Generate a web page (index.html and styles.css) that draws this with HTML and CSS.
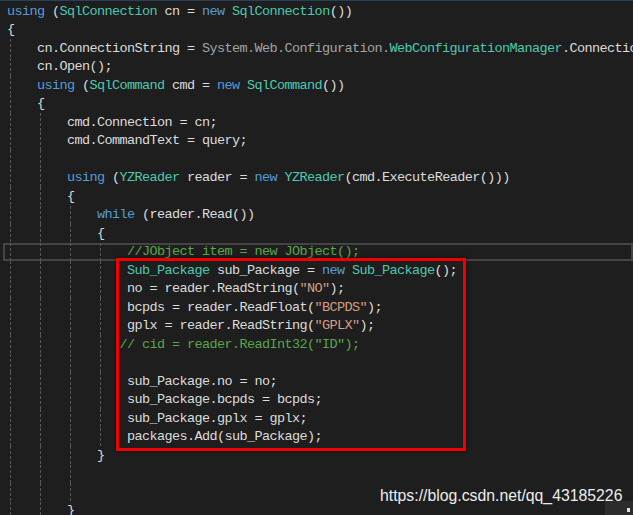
FILE: index.html
```html
<!DOCTYPE html>
<html lang="en">

<head>
    <meta charset="UTF-8" />
    <meta name="viewport" content="width=device-width, initial-scale=1.0" />
    <title>Sub_Package reader</title>
    <link rel="stylesheet" href="styles.css">
</head>

<body>
    <div class="editor">
        <div class="code">
            <div class="ln"><span><span class="k">using</span> (<span class="t">SqlConnection</span> cn = <span class="k">new</span> <span class="t">SqlConnection</span>())</span></div>
            <div class="ln"><span>{</span></div>
            <div class="ln"><i class="g"></i><span>cn.ConnectionString = <span class="q">System.Web.Configuration.</span><span class="t">WebConfigurationManager</span>.ConnectionStrings[<span class="s">"conn"</span>].ConnectionString;</span></div>
            <div class="ln"><i class="g"></i><span>cn.Open();</span></div>
            <div class="ln"><i class="g"></i><span><span class="k">using</span> (<span class="t">SqlCommand</span> cmd = <span class="k">new</span> <span class="t">SqlCommand</span>())</span></div>
            <div class="ln"><i class="g"></i><span>{</span></div>
            <div class="ln"><i class="g"></i><i class="g"></i><span>cmd.Connection = cn;</span></div>
            <div class="ln"><i class="g"></i><i class="g"></i><span>cmd.CommandText = query;</span></div>
            <div class="ln"><i class="g"></i><i class="g"></i></div>
            <div class="ln"><i class="g"></i><i class="g"></i><span><span class="k">using</span> (<span class="t">YZReader</span> reader = <span class="k">new</span> <span class="t">YZReader</span>(cmd.ExecuteReader()))</span></div>
            <div class="ln"><i class="g"></i><i class="g"></i><span>{</span></div>
            <div class="ln"><i class="g"></i><i class="g"></i><i class="g"></i><span><span class="k">while</span> (reader.Read())</span></div>
            <div class="ln"><i class="g"></i><i class="g"></i><i class="g"></i><span>{</span></div>
            <div class="ln current"><i class="g"></i><i class="g"></i><i class="g"></i><i class="g"></i><span class="c">//JObject item = new JObject();</span></div>
            <div class="ln"><i class="g"></i><i class="g"></i><i class="g"></i><i class="g"></i><span><span class="t">Sub_Package</span> sub_Package = <span class="k">new</span> <span class="t">Sub_Package</span>();</span></div>
            <div class="ln"><i class="g"></i><i class="g"></i><i class="g"></i><i class="g"></i><span>no = reader.ReadString(<span class="s">"NO"</span>);</span></div>
            <div class="ln"><i class="g"></i><i class="g"></i><i class="g"></i><i class="g"></i><span>bcpds = reader.ReadFloat(<span class="s">"BCPDS"</span>);</span></div>
            <div class="ln"><i class="g"></i><i class="g"></i><i class="g"></i><i class="g"></i><span>gplx = reader.ReadString(<span class="s">"GPLX"</span>);</span></div>
            <div class="ln"><i class="g"></i><i class="g"></i><i class="g"></i><i class="g"></i><span class="c back">// cid = reader.ReadInt32("ID");</span></div>
            <div class="ln"><i class="g"></i><i class="g"></i><i class="g"></i><i class="g"></i></div>
            <div class="ln"><i class="g"></i><i class="g"></i><i class="g"></i><i class="g"></i><span>sub_Package.no = no;</span></div>
            <div class="ln"><i class="g"></i><i class="g"></i><i class="g"></i><i class="g"></i><span>sub_Package.bcpds = bcpds;</span></div>
            <div class="ln"><i class="g"></i><i class="g"></i><i class="g"></i><i class="g"></i><span>sub_Package.gplx = gplx;</span></div>
            <div class="ln"><i class="g"></i><i class="g"></i><i class="g"></i><i class="g"></i><span>packages.Add(sub_Package);</span></div>
            <div class="ln"><i class="g"></i><i class="g"></i><i class="g"></i><span>}</span></div>
            <div class="ln"><i class="g"></i><i class="g"></i><i class="g"></i></div>
            <div class="ln"><i class="g"></i><i class="g"></i><i class="g"></i></div>
            <div class="ln"><i class="g"></i><i class="g"></i><span>}</span></div>
        </div>

        <!-- annotation drawn over the code -->
        <div class="mark"></div>
        <div class="watermark">https://blog.csdn.net/qq_43185226</div>
        <div class="corner"></div>
    </div>
</body>

</html>
```

FILE: styles.css
```css
* {
    margin: 0;
    padding: 0;
    box-sizing: border-box;
}

body,
html {
    height: 100%;
    background: #1e1e1e;
    overflow: hidden;
}

.editor {
    position: relative;
    width: 633px;
    height: 515px;
    background: #1e1e1e;
    border-top: 1px solid #24405a;
    overflow: hidden;
}

.code {
    padding-top: 1px;
    font-family: "Liberation Mono", monospace;
    font-size: 13.5px;
    letter-spacing: -0.6px;
    color: #dcdcdc;
}

.ln {
    display: flex;
    align-items: center;
    height: 18.5px;
    padding-left: 7px;
    white-space: pre;
}

/* indent guide: one per open block */
.g {
    flex: none;
    width: 30px;
    height: 100%;
    background: repeating-linear-gradient(to bottom, #575757 0 3px, transparent 3px 5px) 3px 0 / 1px 100% no-repeat;
}

.current {
    margin-left: 3px;
    padding-left: 4px;
    box-shadow: inset 0 0 0 2px #444444;
}

.k {
    color: #569cd6;
}

.t {
    color: #4ec9b0;
}

.s {
    color: #d69d85;
}

.c {
    color: #57a64a;
}

.q {
    color: #a3a3a3;
}

.back {
    margin-left: -7.5px;
}

.mark {
    position: absolute;
    left: 116px;
    top: 257px;
    width: 350px;
    height: 193px;
    border: 3px solid #f20000;
    box-shadow: 0 0 3px rgba(0, 0, 0, 0.7);
}

.watermark {
    position: absolute;
    left: 380px;
    top: 486px;
    font-family: "Liberation Sans", Arial, sans-serif;
    font-size: 15.8px;
    color: #ececec;
}

.corner {
    position: absolute;
    right: 0;
    bottom: 0;
    width: 28px;
    height: 14px;
    background: #2c2c2c;
}

.corner::after {
    content: "";
    position: absolute;
    right: 3px;
    bottom: 3px;
    width: 3px;
    height: 4px;
    background: #e0e0e0;
}
```
